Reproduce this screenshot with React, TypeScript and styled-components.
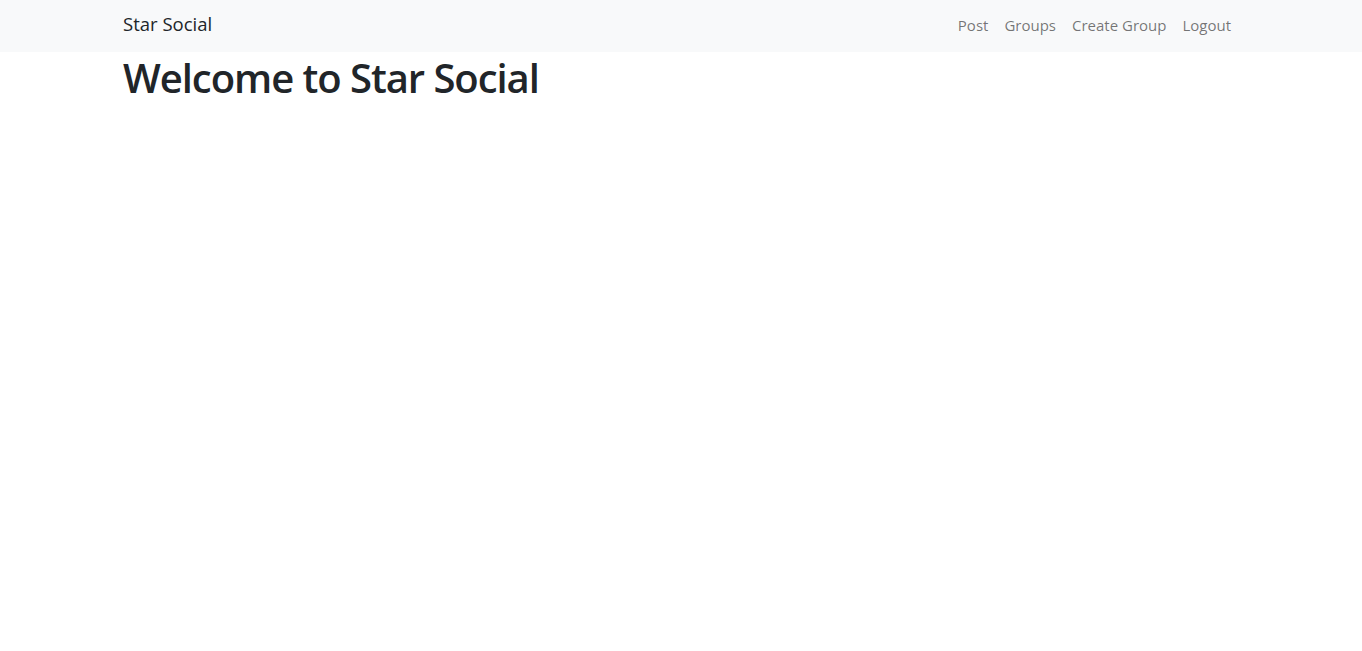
import React from "react";
import styled, { createGlobalStyle } from "styled-components";

const Global = createGlobalStyle`
  html, body { margin: 0; padding: 0; background: #fff; }
  body { font-family: "Open Sans", "Noto Sans", sans-serif; color: #212529; }
  * { box-sizing: border-box; }
`;

const Navbar = styled.nav`
  background: #f8f9fa;
  height: 52px;
  padding-top: 9px;
`;

const Container = styled.div`
  width: 1140px;
  margin: 0 auto;
  padding: 0 12px;
  display: flex;
  align-items: baseline;
  justify-content: space-between;
`;

const Brand = styled.a`
  font-size: 18.5px;
  color: #212529;
  text-decoration: none;
  line-height: 30px;
`;

const NavList = styled.ul`
  list-style: none;
  margin: 0;
  padding: 0;
  display: flex;
  align-items: baseline;
`;

const NavLink = styled.a`
  display: block;
  padding: 0 8px;
  font-size: 15px;
  color: rgba(0, 0, 0, 0.55);
  text-decoration: none;
  line-height: 30px;
  position: relative;
  top: -0.5px;
`;

const Main = styled.main`
  width: 1140px;
  margin: 0 auto;
  padding: 0 12px;
`;

const Title = styled.h1`
  margin: 2px 0 0;
  font-size: 40px;
  font-weight: 600;
  line-height: 48px;
  letter-spacing: -1.05px;
  color: #212529;
`;

export default function App() {
  return (
    <>
      <Global />
      <Navbar>
        <Container>
          <Brand href="#">Star Social</Brand>
          <NavList>
            {["Post", "Groups", "Create Group", "Logout"].map((l) => (
              <li key={l}>
                <NavLink href="#">{l}</NavLink>
              </li>
            ))}
          </NavList>
        </Container>
      </Navbar>
      <Main>
        <Title>Welcome to Star Social</Title>
      </Main>
    </>
  );
}
